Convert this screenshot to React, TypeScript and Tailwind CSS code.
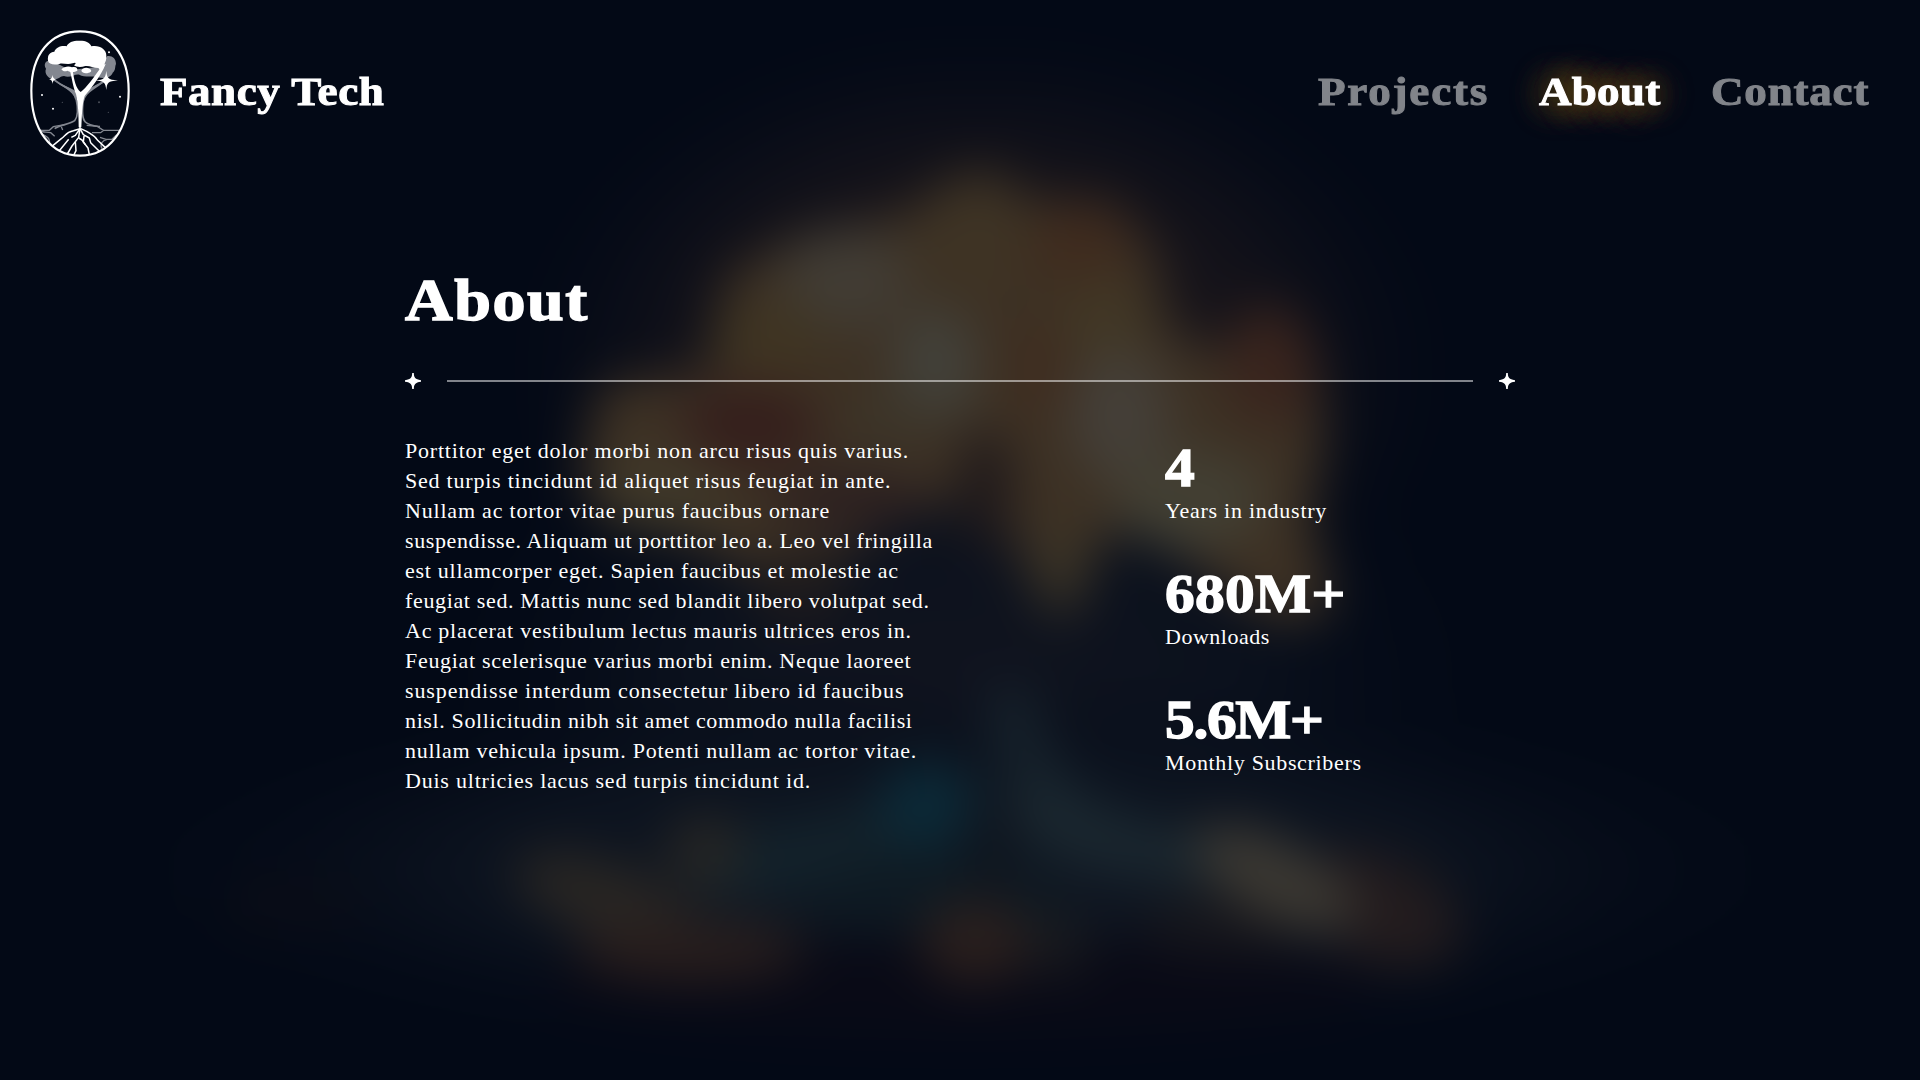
const serif = "font-['Liberation_Serif',serif]";
const display =
  "inline-block origin-left whitespace-nowrap font-['Liberation_Serif',serif] font-bold scale-x-110";

const paragraph: [string, number][] = [
  ["Porttitor eget dolor morbi non arcu risus quis varius.", 0.79],
  ["Sed turpis tincidunt id aliquet risus feugiat in ante.", 0.78],
  ["Nullam ac tortor vitae purus faucibus ornare", 0.8],
  ["suspendisse. Aliquam ut porttitor leo a. Leo vel fringilla", 0.61],
  ["est ullamcorper eget. Sapien faucibus et molestie ac", 0.73],
  ["feugiat sed. Mattis nunc sed blandit libero volutpat sed.", 0.65],
  ["Ac placerat vestibulum lectus mauris ultrices eros in.", 0.74],
  ["Feugiat scelerisque varius morbi enim. Neque laoreet", 0.7],
  ["suspendisse interdum consectetur libero id faucibus", 0.89],
  ["nisl. Sollicitudin nibh sit amet commodo nulla facilisi", 0.63],
  ["nullam vehicula ipsum. Potenti nullam ac tortor vitae.", 0.71],
  ["Duis ultricies lacus sed turpis tincidunt id.", 0.78],
];

const stats = [
  { value: "4", label: "Years in industry", valueSpacing: 0, labelSpacing: 0.75 },
  { value: "680M+", label: "Downloads", valueSpacing: 0.3, labelSpacing: 0.5 },
  { value: "5.6M+", label: "Monthly Subscribers", valueSpacing: -1.2, labelSpacing: 0.67 },
];

function Backdrop() {
  return (
    <svg className="absolute inset-0 h-full w-full" viewBox="0 0 1920 1080" aria-hidden="true">
      <defs>
        <filter id="soft" filterUnits="userSpaceOnUse" x="-100" y="-100" width="2120" height="1280" colorInterpolationFilters="sRGB">
          <feGaussianBlur stdDeviation="25" />
        </filter>
        <radialGradient id="halo">
          <stop offset="0" stopColor="#1d181b" />
          <stop offset="0.5" stopColor="#17141a" />
          <stop offset="0.75" stopColor="#0a0d18" />
          <stop offset="1" stopColor="#030916" stopOpacity="0" />
        </radialGradient>
        <radialGradient id="ground">
          <stop offset="0" stopColor="#111823" />
          <stop offset="0.55" stopColor="#0c131f" />
          <stop offset="1" stopColor="#030916" stopOpacity="0" />
        </radialGradient>
        <radialGradient id="column">
          <stop offset="0" stopColor="#11141f" />
          <stop offset="0.5" stopColor="#0b111d" />
          <stop offset="1" stopColor="#030916" stopOpacity="0" />
        </radialGradient>
      </defs>
      <g filter="url(#soft)">
        <rect x="-100" y="-100" width="2120" height="1280" fill="#030916" />
        <ellipse cx="980" cy="370" rx="490" ry="360" fill="url(#halo)" />
        <ellipse cx="960" cy="690" rx="560" ry="360" fill="url(#column)" />
        <ellipse cx="960" cy="870" rx="880" ry="190" fill="url(#ground)" />
        <ellipse cx="960" cy="985" rx="420" ry="50" fill="#090a16" />
        {/* Canopy */}
        <path
          d="M900 215 L985 165 L1030 200 L1110 200 L1155 250 L1165 320 L1210 355 L1270 310 L1315 350 L1325 440 L1310 520 L1335 610 L1280 625 L1200 570 L1150 530 L1110 530 L1080 590 L1055 620 L1025 570 L1000 500 L985 440 L960 500 L900 520 L830 560 L760 575 L690 540 L600 520 L580 470 L600 385 L710 370 L725 275 L800 235 Z"
          fill="#3d3124"
        />
        <ellipse cx="975" cy="235" rx="60" ry="60" fill="#3e3324" />
        <ellipse cx="1080" cy="245" rx="50" ry="42" fill="#3f2b1e" />
        <ellipse cx="1105" cy="320" rx="45" ry="45" fill="#413725" />
        <ellipse cx="845" cy="280" rx="65" ry="50" fill="#413c34" />
        <ellipse cx="770" cy="340" rx="60" ry="40" fill="#3f3422" />
        <ellipse cx="935" cy="365" rx="42" ry="58" fill="#42413a" />
        <ellipse cx="1040" cy="370" rx="32" ry="50" fill="#3f2d20" />
        <ellipse cx="1120" cy="415" rx="50" ry="65" fill="#443f38" />
        <ellipse cx="1270" cy="365" rx="42" ry="60" fill="#39241d" />
        <ellipse cx="750" cy="425" rx="70" ry="42" fill="#351f1c" />
        <ellipse cx="665" cy="490" rx="65" ry="38" fill="#3f3829" />
        <ellipse cx="890" cy="425" rx="50" ry="28" fill="#3c3428" />
        <ellipse cx="1190" cy="500" rx="75" ry="50" fill="#423f33" />
        <ellipse cx="1062" cy="570" rx="26" ry="45" fill="#3a3326" />
        <ellipse cx="985" cy="490" rx="28" ry="60" fill="#1f191b" />
        <ellipse cx="850" cy="500" rx="80" ry="30" fill="#2c2020" />
        <ellipse cx="800" cy="590" rx="45" ry="40" fill="#1d1a1c" />
        {/* Trunk and roots */}
        <path d="M955 770 C930 825 860 855 690 870" fill="none" stroke="#13222b" strokeWidth="68" />
        <path d="M1008 690 C1020 790 1080 845 1230 860" fill="none" stroke="#17232c" strokeWidth="46" />
        <path d="M1025 790 C1050 835 1100 850 1230 860" fill="none" stroke="#1b2830" strokeWidth="50" />
        <path d="M900 850 L1020 840 L1070 920 L850 930 L780 890 Z" fill="#0e1a23" />
        <ellipse cx="925" cy="805" rx="45" ry="42" fill="#0b2a38" />
        <ellipse cx="993" cy="850" rx="18" ry="70" fill="#0f141e" />
        <ellipse cx="705" cy="850" rx="38" ry="34" fill="#272624" />
        <ellipse cx="605" cy="898" rx="95" ry="36" fill="#292623" transform="rotate(18 605 898)" />
        <ellipse cx="690" cy="950" rx="115" ry="32" fill="#281e1d" />
        <ellipse cx="975" cy="942" rx="55" ry="42" fill="#2a1f1d" />
        <ellipse cx="1055" cy="945" rx="34" ry="32" fill="#191a1e" />
        <ellipse cx="1380" cy="910" rx="85" ry="52" fill="#231c1e" transform="rotate(25 1380 910)" />
        <ellipse cx="1230" cy="925" rx="90" ry="26" fill="#18181d" />
        <ellipse cx="1275" cy="878" rx="90" ry="38" fill="#3b3832" transform="rotate(28 1275 878)" />
        <ellipse cx="290" cy="905" rx="70" ry="20" fill="#0b0d16" />
      </g>
    </svg>
  );
}

function TreeLogo() {
  return (
    <svg className="h-[145px] w-[120px] shrink-0" viewBox="0 0 360 435" fill="none" aria-label="Fancy Tech logo">
      <defs>
        <clipPath id="oval">
          <path d="M180 34 C268 34 326 102 326 212 C326 330 268 407 180 407 C92 407 34 330 34 212 C34 102 92 34 180 34 Z" />
        </clipPath>
      </defs>
      {/* Shaded foliage */}
      <path
        d="M90 120 C72 124 72 138 78 146 C72 160 84 176 102 178 C118 178 120 168 132 168 C150 176 166 160 178 164 C194 174 220 166 234 172 C252 178 274 172 278 158 C288 150 284 140 288 132 C288 114 276 106 262 108 L240 140 L150 150 Z"
        fill="#838790"
      />
      {/* Rear branches */}
      <path d="M101 178 C126 200 160 204 168 234 C174 262 174 290 164 302 C150 312 118 316 104 326" stroke="#838790" strokeWidth="5" />
      <path d="M258 180 C232 198 198 206 190 240 C186 270 186 296 196 306 C206 316 226 318 240 320" stroke="#838790" strokeWidth="5" />
      <path d="M101 178 C126 206 158 208 166 240 L176 222 C158 202 128 200 101 178 Z M258 180 C234 206 200 212 192 244 L188 222 C206 202 234 196 258 180 Z" fill="#838790" />
      {/* Bright foliage */}
      <path
        d="M84 122 C82 104 90 96 103 95 C108 82 124 76 140 79 C144 66 162 61 180 62 C198 62 210 68 214 79 C236 74 260 86 259 108 C260 126 250 140 236 144 C218 144 208 136 196 138 C184 142 170 142 162 136 C170 130 168 126 158 130 C142 136 128 128 118 132 C100 136 86 132 84 122 Z"
        fill="white"
      />
      <path d="M124 148 C134 138 148 138 156 142 C166 138 174 144 172 152 C162 158 150 156 142 152 C136 156 128 154 124 148 Z M184 152 C188 142 202 142 208 146 C216 150 216 156 206 158 C196 162 186 158 184 152 Z" fill="white" />
      <path d="M232 140 C246 138 252 128 257 118 L252 136 L240 150 Z" fill="white" />
      {/* Trunk */}
      <path
        d="M150 152 L158 150 C162 180 168 206 182 216 C198 204 222 172 248 134 L257 132 C242 170 212 206 194 228 C186 252 186 286 184 322 L176 322 C176 286 174 246 168 222 C160 204 156 176 150 152 Z"
        fill="white"
      />
      <g clipPath="url(#oval)">
        {/* Distant roots */}
        <g stroke="#838790" strokeWidth="4">
          <path d="M36 331 H88 L100 320 L134 314 M62 329 C66 340 78 334 92 338 L104 349" />
          <path d="M60 342 C80 346 92 356 88 374 M128 330 L124 320" />
          <path d="M324 331 H250 L232 319 L200 316 M216 338 H242 L252 330" />
          <path d="M310 346 H288 L276 358 H258 L240 352 M246 386 C238 372 248 360 262 358 M262 386 L282 364 H300" />
        </g>
        {/* Near roots */}
        <g stroke="white" strokeWidth="4.5" strokeLinejoin="round">
          <path d="M180 318 V326 L160 332 C138 336 136 348 124 356 L92 382" />
          <path d="M180 326 L166 346 L154 352 M146 358 L118 392 M180 326 L176 352 L156 378 L142 402" />
          <path d="M176 354 L186 360 L196 374 M166 366 L168 392 L160 408" />
          <path d="M180 326 L190 344 L208 354 L212 368 L238 394 M192 348 L190 366 L204 384 L208 404" />
          <path d="M182 326 L200 334 C212 342 224 346 232 360 L266 392" />
        </g>
      </g>
      {/* Stars */}
      <g fill="white">
        <path d="M259 152 C261 174 263 179 294 181 C263 184 261 188 259 210 C256 188 254 184 226 181 C254 179 256 174 259 152 Z" />
        <path d="M98 164 C99 174 101 176 110 178 C101 180 99 182 98 192 C96 182 95 180 86 178 C95 176 96 174 98 164 Z" />
        <circle cx="66" cy="225" r="3" />
        <circle cx="99" cy="266" r="3" />
        <circle cx="300" cy="230" r="3" />
        <circle cx="267" cy="97" r="3" />
      </g>
      <g fill="#4b505a">
        <circle cx="127" cy="247" r="2" />
        <circle cx="237" cy="247" r="3" />
        <circle cx="265" cy="277" r="2" />
      </g>
      <path
        d="M180 34 C268 34 326 102 326 212 C326 330 268 407 180 407 C92 407 34 330 34 212 C34 102 92 34 180 34 Z"
        stroke="white"
        strokeWidth="6.5"
      />
    </svg>
  );
}

function Sparkle() {
  return (
    <svg className="size-4 shrink-0" viewBox="0 0 16 16" fill="white" aria-hidden="true">
      <path d="M7.2 0 H8.8 C9 4.5 10 6.4 16 7.2 V8.8 C10 9.6 9 11.5 8.8 16 H7.2 C7 11.5 6 9.6 0 8.8 V7.2 C6 6.4 7 4.5 7.2 0 Z" />
    </svg>
  );
}

export default function App() {
  return (
    <div className="relative h-[1080px] w-full overflow-hidden bg-[#030916] text-white">
      <Backdrop />
      <div className="relative">
        <header className="flex h-[185px] items-start justify-between pt-5 pr-[51px] pl-5">
          <a className="flex gap-5">
            <TreeLogo />
            <span className={`${display} pt-[47px] text-[41px] leading-[48px] tracking-[0.45px] [-webkit-text-stroke:1px_white]`}>
              Fancy Tech
            </span>
          </a>
          <nav className="flex gap-[51px] pt-[45px] text-[41px] leading-[48px]">
            <a className="w-[170px]">
              <span className={`${display} tracking-[1.6px] text-[#81848a] [-webkit-text-stroke:1px_#81848a]`}>Projects</span>
            </a>
            <a className="w-[121px]">
              <span className={`${display} tracking-[0.2px] [-webkit-text-stroke:1px_white] [text-shadow:0_0_38px_rgba(255,180,0,0.42),0_0_38px_rgba(255,180,0,0.42),0_0_38px_rgba(255,180,0,0.42)]`}>
                About
              </span>
            </a>
            <a className="w-[158px]">
              <span className={`${display} tracking-[0.7px] text-[#81848a] [-webkit-text-stroke:1px_#81848a]`}>Contact</span>
            </a>
          </nav>
        </header>
        <main className="mx-auto w-[1110px] pt-[80px]">
          <h1 className={`${display} text-[60px] leading-[70px] tracking-[1.4px] [-webkit-text-stroke:1.5px_white]`}>About</h1>
          <div className="mt-[38px] flex items-center gap-[26px]">
            <Sparkle />
            <div className="h-0.5 flex-1 bg-white/50" />
            <Sparkle />
          </div>
          <div className="mt-[47px] flex justify-between">
            <p className={`${serif} text-[22px] leading-[30px]`}>
              {paragraph.map(([line, spacing]) => (
                <span key={line} className="block whitespace-nowrap" style={{ letterSpacing: spacing }}>
                  {line}
                </span>
              ))}
            </p>
            <dl className="flex w-[350px] flex-col gap-[36px]">
              {stats.map((s) => (
                <div key={s.label} className="flex h-[90px] flex-col-reverse justify-end">
                  <dt className={`${serif} text-[22px] leading-[30px] whitespace-nowrap`} style={{ letterSpacing: s.labelSpacing }}>
                    {s.label}
                  </dt>
                  <dd className="h-[60px] text-[54px] leading-[58px]">
                    <span className={`${display} [-webkit-text-stroke:1.4px_white]`} style={{ letterSpacing: s.valueSpacing }}>
                      {s.value}
                    </span>
                  </dd>
                </div>
              ))}
            </dl>
          </div>
        </main>
      </div>
    </div>
  );
}
